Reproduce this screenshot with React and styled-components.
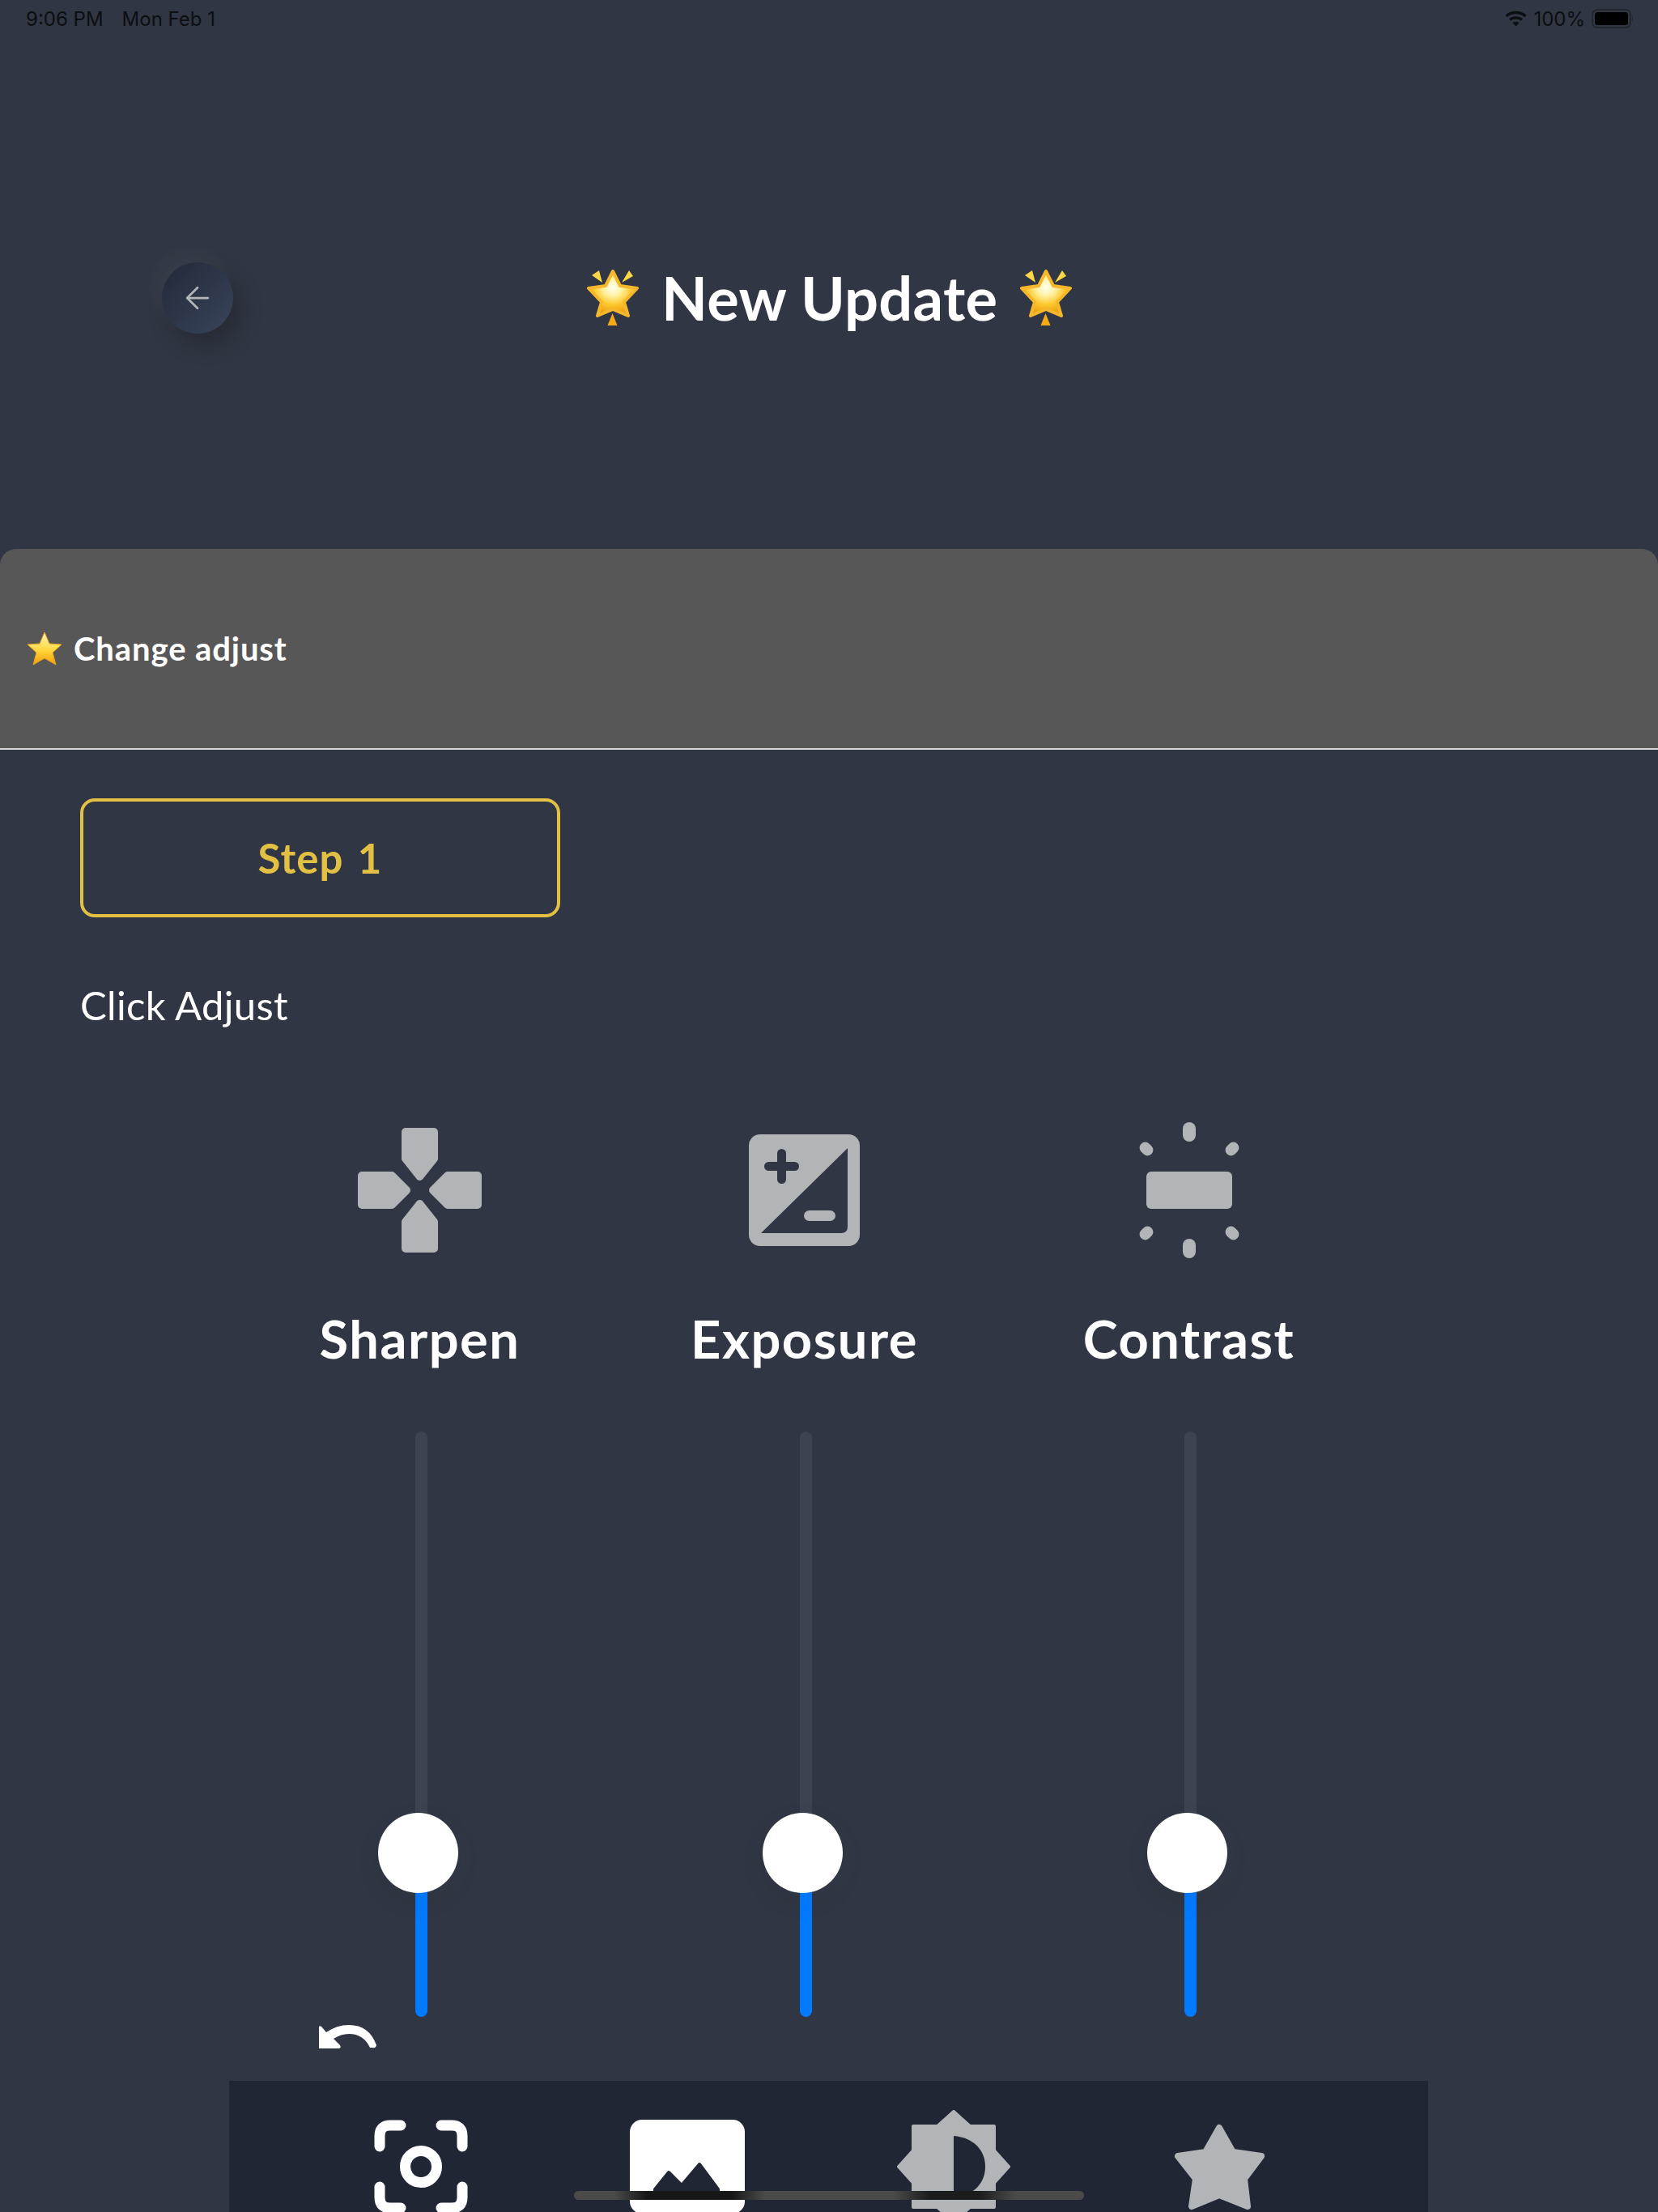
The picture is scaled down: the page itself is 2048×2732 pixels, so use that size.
import React from 'react';
import styled, { createGlobalStyle } from 'styled-components';
import { ArrowLeft } from 'lucide-react';

const GlobalStyle = createGlobalStyle`
  html, body {
    margin: 0;
    padding: 0;
    background: #303643;
  }
  * {
    box-sizing: border-box;
  }
`;

const headingFont = `Lato, "Open Sans", sans-serif`;
const pageBg = '#303643';
const iconGrey = '#b1b5b8';

const Page = styled.div`
  position: relative;
  width: 2048px;
  height: 2732px;
  overflow: hidden;
  display: flex;
  flex-direction: column;
  background: ${pageBg};
  font-family: ${headingFont};
  color: #fff;
  & > * {
    flex-shrink: 0;
  }
`;

const StatusBar = styled.div`
  height: 46px;
  padding: 0 30px 0 32px;
  display: flex;
  align-items: center;
  justify-content: space-between;
  font-family: Inter, sans-serif;
  font-size: 24px;
  color: #0c0e12;
`;

const StatusGroup = styled.div`
  display: flex;
  align-items: center;
  gap: ${(p) => p.$gap}px;
`;

const Header = styled.header`
  height: 632px;
  padding: 12px 0 0 200px;
  display: grid;
  grid-template-columns: 524px auto;
  align-items: center;
`;

const BackButton = styled.div`
  width: 88px;
  height: 88px;
  border-radius: 50%;
  display: flex;
  align-items: center;
  justify-content: center;
  color: ${iconGrey};
  background: linear-gradient(135deg, #222837, #39455c);
  box-shadow: -8px -12px 24px rgba(255, 255, 255, 0.045), 10px 14px 28px rgba(0, 0, 0, 0.22);
`;

const Title = styled.h1`
  margin: 0;
  display: flex;
  align-items: center;
  gap: 27px;
  font-size: 74px;
  font-weight: 700;
  line-height: 1;
  letter-spacing: 0.3px;
`;

const ChangePanel = styled.div`
  height: 248px;
  padding-left: 33px;
  display: flex;
  align-items: center;
  gap: 14px;
  background: #575757;
  border-radius: 20px 20px 0 0;
  border-bottom: 2px solid #d8d8d8;
  font-size: 40px;
  font-weight: 700;
  letter-spacing: 0.9px;
`;

const Content = styled.div`
  padding: 60px 0 0 99px;
`;

const StepBox = styled.div`
  width: 593px;
  height: 147px;
  display: flex;
  align-items: center;
  justify-content: center;
  border: 4px solid #e2c044;
  border-radius: 18px;
  color: #e2c044;
  font-size: 51px;
  font-weight: 700;
  word-spacing: 4px;
  letter-spacing: 1px;
`;

const Hint = styled.p`
  margin: 78px 0 0;
  font-size: 49px;
  line-height: 60px;
  letter-spacing: 0.3px;
`;

const Controls = styled.div`
  margin-top: 115px;
  padding-left: 283px;
  display: grid;
  grid-template-columns: repeat(3, 475px);
`;

const Control = styled.div`
  display: flex;
  flex-direction: column;
  align-items: center;
`;

const IconSlot = styled.div`
  height: 168px;
  margin-left: -4px;
  display: flex;
  align-items: center;
  justify-content: center;
`;

const ControlLabel = styled.div`
  margin-top: 59px;
  margin-left: -4px;
  font-size: 65px;
  font-weight: 700;
  line-height: 80px;
  letter-spacing: 1.5px;
`;

const Track = styled.div`
  position: relative;
  width: 15px;
  height: 723px;
  margin-top: 75px;
  display: flex;
  flex-direction: column;
  border-radius: 8px;
  background: #3d4350;
`;

const TrackFill = styled.div`
  margin-top: auto;
  height: 202px;
  border-radius: 0 0 8px 8px;
  background: #007aff;
`;

const Thumb = styled.div`
  position: absolute;
  left: -46px;
  bottom: 153px;
  width: 99px;
  height: 99px;
  border-radius: 50%;
  background: #fff;
  box-shadow: 14px 6px 30px rgba(255, 255, 255, 0.02), 0 10px 34px rgba(0, 0, 0, 0.06);
`;

const UndoRow = styled.div`
  height: 29px;
  margin: 10px 0 0 394px;
  display: flex;
`;

const TabBar = styled.nav`
  width: 1481px;
  height: 170px;
  margin: 40px 0 0 283px;
  padding: 36px 0 0 72px;
  display: grid;
  grid-template-columns: repeat(4, 329px);
  align-items: start;
  background: #202634;
`;

const Tab = styled.div`
  height: 140px;
  display: flex;
  justify-content: center;
  align-items: center;
`;

const HomeIndicator = styled.div`
  position: absolute;
  left: 709px;
  top: 2706px;
  width: 630px;
  height: 11px;
  border-radius: 6px;
  background: linear-gradient(
    90deg,
    #4a4a4a 0,
    #4a4a4a 50px,
    #171717 90px,
    #171717 195px,
    #4a4a4a 235px,
    #4a4a4a 395px,
    #1c1c1c 440px,
    #1c1c1c 500px,
    #4a4a4a 545px
  );
`;

const GlowStar = ({ id }) => (
  <svg width="66" height="70" viewBox="0 0 66 70">
    <defs>
      <radialGradient id={id} cx="50%" cy="36%" r="62%">
        <stop offset="0" stopColor="#fffef2" />
        <stop offset="0.3" stopColor="#fff3a6" />
        <stop offset="0.62" stopColor="#fdc92f" />
        <stop offset="1" stopColor="#ef9a0c" />
      </radialGradient>
    </defs>
    <path
      d="M33 2 L42 20 L63 23 L47 40 L52 57 L33 49 L14 57 L19 40 L3 23 L24 20 Z"
      fill={`url(#${id})`}
      stroke="#f5b72c"
      strokeWidth="4"
      strokeLinejoin="round"
    />
    <path d="M7 7 L16 1 L20 16 Z M58 8 L53 1 L44 16 Z" fill="#fbd646" />
    <path d="M32.5 54 L38.5 69 H26.5 Z" fill="#f6a915" />
  </svg>
);

const SmallStar = () => (
  <svg width="44" height="42" viewBox="0 0 44 42">
    <defs>
      <linearGradient id="small" x1="0" y1="0" x2="0" y2="1">
        <stop offset="0" stopColor="#fff7c2" />
        <stop offset="0.55" stopColor="#ffd83d" />
        <stop offset="1" stopColor="#f59c0c" />
      </linearGradient>
    </defs>
    <path d="M22 1 L28 15 L43 16 L32 26 L36 41 L22 33 L8 41 L12 26 L1 16 L16 15 Z" fill="url(#small)" stroke="#eaa31a" strokeWidth="1" strokeLinejoin="round" />
  </svg>
);

const WifiIcon = () => (
  <svg width="27" height="20" viewBox="0 0 27 20" fill="none" stroke="#0c0e12" strokeWidth="3.4">
    <path d="M1.5 7 C8 1 19 1 25.5 7" />
    <path d="M6 11.5 C10 8 17 8 21 11.5" />
    <path d="M13.5 19.5 L9.5 15 C12 13.4 15 13.4 17.5 15 Z" fill="#0c0e12" stroke="none" />
  </svg>
);

const BatteryIcon = () => (
  <svg width="52" height="24" viewBox="0 0 52 24">
    <rect x="1" y="1" width="47" height="22" rx="6" fill="none" stroke="#22272f" strokeWidth="2" />
    <rect x="4" y="4" width="41" height="16" rx="3.5" fill="#000" />
    <path d="M50 8 Q52 12 50 16 Z" fill="#22272f" />
  </svg>
);

const SharpenIcon = () => (
  <svg width="153" height="154" viewBox="0 0 153 154" fill={iconGrey} stroke={iconGrey} strokeWidth="10" strokeLinejoin="round">
    <path d="M59 5 H94 V38 L76.5 60 L59 38 Z" />
    <path d="M59 149 H94 V116 L76.5 94 L59 116 Z" />
    <path d="M5 59 V95 H42 L60 77 L42 59 Z" />
    <path d="M148 59 V95 H111 L93 77 L111 59 Z" />
  </svg>
);

const ExposureIcon = () => (
  <svg width="137" height="138" viewBox="0 0 137 138">
    <rect width="137" height="138" rx="14" fill={iconGrey} />
    <path d="M122 17 V114 Q122 122 114 122 H15 Z" fill={pageBg} />
    <rect x="19" y="34" width="43" height="11" rx="5.5" fill={pageBg} />
    <rect x="35" y="18" width="11" height="43" rx="5.5" fill={pageBg} />
    <rect x="68" y="94" width="39" height="13" rx="6.5" fill={iconGrey} />
  </svg>
);

const ContrastIcon = () => (
  <svg width="124" height="168" viewBox="0 0 124 168" fill={iconGrey}>
    <rect x="9" y="61" width="106" height="46" rx="6" />
    <rect x="54" y="0" width="16" height="24" rx="8" />
    <rect x="54" y="144" width="16" height="24" rx="8" />
    <rect x="2" y="24" width="14" height="18" rx="7" transform="rotate(-45 9 33)" />
    <rect x="108" y="24" width="14" height="18" rx="7" transform="rotate(45 115 33)" />
    <rect x="2" y="128" width="14" height="18" rx="7" transform="rotate(45 9 137)" />
    <rect x="108" y="128" width="14" height="18" rx="7" transform="rotate(-45 115 137)" />
  </svg>
);

const UndoIcon = () => (
  <svg width="71" height="29" viewBox="0 0 71 29" fill="#fff">
    <path d="M0 3 Q0 0 3 2 L9 9 Q22 0 37 0 Q62 0 71 25 Q70 29 66 28 L63 28 Q55 11 37 11 Q27 11 18 17 L26 25 Q28 29 24 29 H0 Z" />
  </svg>
);

const FocusIcon = () => (
  <svg width="116" height="116" viewBox="0 0 116 116" fill="none" stroke="#fff" strokeWidth="13" strokeLinecap="round">
    <path d="M7 33 V20 Q7 7 20 7 H33" />
    <path d="M83 7 H96 Q109 7 109 20 V33" />
    <path d="M7 83 V96 Q7 109 20 109 H33" />
    <path d="M83 109 H96 Q109 109 109 96 V83" />
    <circle cx="58" cy="58" r="19.5" />
  </svg>
);

const PhotoIcon = () => (
  <svg width="142" height="116" viewBox="0 0 142 116">
    <rect width="142" height="116" rx="15" fill="#fff" />
    <path d="M31 86 L48 65 L64 81 L86 55 L109 86 V94 H31 Z" fill="#202634" stroke="#202634" strokeWidth="4" strokeLinejoin="round" />
  </svg>
);

const BrightnessIcon = () => (
  <svg width="140" height="140" viewBox="0 0 140 140">
    <path d="M70 2 L90 20 H120 V50 L138 70 L120 90 V120 H90 L70 138 L50 120 H20 V90 L2 70 L20 50 V20 H50 Z" fill={iconGrey} stroke={iconGrey} strokeWidth="4" strokeLinejoin="round" />
    <path d="M70 32 C95 34 109 50 109 70 C109 90 95 106 70 108 Z" fill="#202634" />
  </svg>
);

const StarIcon = () => (
  <svg width="111" height="140" viewBox="0 -18 111 140">
    <path d="M55 4 L72 34 L107 39 L86 67 L90 101 L55 87 L21 101 L26 67 L4 39 L38 34 Z" fill={iconGrey} stroke={iconGrey} strokeWidth="8" strokeLinejoin="round" />
  </svg>
);

const controls = [
  { label: 'Sharpen', icon: <SharpenIcon /> },
  { label: 'Exposure', icon: <ExposureIcon /> },
  { label: 'Contrast', icon: <ContrastIcon /> },
];

const App = () => {
  return (
    <Page>
      <GlobalStyle />
      <StatusBar>
        <StatusGroup $gap={23}>
          <span>9:06 PM</span>
          <span>Mon Feb 1</span>
        </StatusGroup>
        <StatusGroup $gap={8}>
          <WifiIcon />
          <span>100%</span>
          <BatteryIcon />
        </StatusGroup>
      </StatusBar>

      <Header>
        <BackButton>
          <ArrowLeft size={44} strokeWidth={1.5} />
        </BackButton>
        <Title>
          <GlowStar id="glow-left" />
          <span>New Update</span>
          <GlowStar id="glow-right" />
        </Title>
      </Header>

      <ChangePanel>
        <SmallStar />
        <span>Change adjust</span>
      </ChangePanel>

      <Content>
        <StepBox>Step 1</StepBox>
        <Hint>Click Adjust</Hint>
      </Content>

      <Controls>
        {controls.map((c) => (
          <Control key={c.label}>
            <IconSlot>{c.icon}</IconSlot>
            <ControlLabel>{c.label}</ControlLabel>
            <Track>
              <TrackFill />
              <Thumb />
            </Track>
          </Control>
        ))}
      </Controls>

      <UndoRow>
        <UndoIcon />
      </UndoRow>

      <TabBar>
        <Tab><FocusIcon /></Tab>
        <Tab><PhotoIcon /></Tab>
        <Tab><BrightnessIcon /></Tab>
        <Tab><StarIcon /></Tab>
      </TabBar>

      <HomeIndicator />
    </Page>
  );
};

export default App;
